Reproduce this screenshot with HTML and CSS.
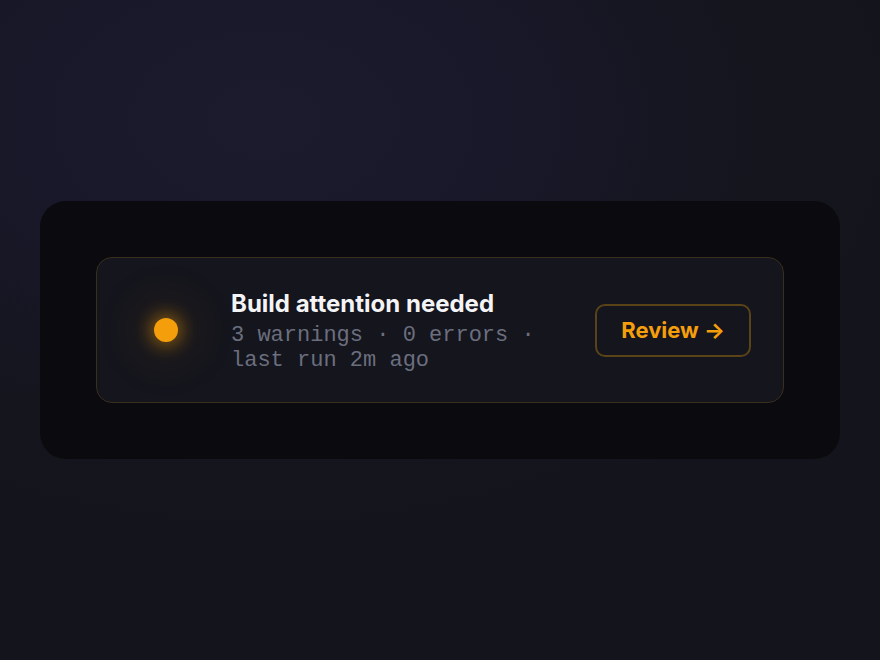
FILE: index.html
```html
<!DOCTYPE html>
<html>
  <head>
    <title>Build status</title>
    <link rel="stylesheet" href="styles.css">
  </head>
  <body>
    <div class="stage">
      <div class="panel">
        <div class="card">
          <div class="signal">
            <span class="dot"></span>
          </div>
          <div class="info">
            <div class="title">Build attention needed</div>
            <div class="meta">3 warnings · 0 errors · last run 2m ago</div>
          </div>
          <button class="review" type="button">Review →</button>
        </div>
      </div>
    </div>
  </body>
</html>
```

FILE: styles.css
```css
html, body {
  margin: 0;
  height: 100%;
}

body {
  font-family: 'Inter', 'Liberation Sans', sans-serif;
  background: radial-gradient(ellipse 75% 65% at 30% 18%, #1c1b2e 0%, #18182a 35%, #15151e 75%, #14141c 100%);
}

.stage {
  height: 660px;
  display: flex;
  align-items: center;
  justify-content: center;
}

.panel {
  width: 800px;
  box-sizing: border-box;
  padding: 56px;
  background-color: #0b0b0f;
  border-radius: 26px;
}

.card {
  display: flex;
  align-items: center;
  gap: 28px;
  padding: 29px 32px;
  border: 1px solid #3a2e1c;
  border-radius: 16px;
  background-color: #14151d;
}

.signal {
  width: 74px;
  height: 74px;
  flex: none;
  display: flex;
  align-items: center;
  justify-content: center;
}

.dot {
  width: 24px;
  height: 24px;
  border-radius: 50%;
  background-color: #f59e0b;
  box-shadow: 0 0 16px 5px rgba(245, 158, 11, 0.4), 0 0 48px 22px rgba(245, 158, 11, 0.07);
}

.info {
  flex: 1;
  text-align: left;
}

.title {
  font-size: 24px;
  font-weight: 700;
  line-height: 30px;
  color: #f4f4f6;
  padding-top: 2px;
}

.meta {
  max-width: 330px;
  margin-top: 4px;
  font-family: 'Liberation Mono', monospace;
  font-size: 22px;
  line-height: 25px;
  color: #6b6e7e;
}

.review {
  flex: none;
  padding: 12px 24px;
  border: 2px solid #5a4317;
  border-radius: 10px;
  background: transparent;
  color: #f59e0b;
  font-family: 'Inter', 'Liberation Sans', sans-serif;
  font-size: 22px;
  font-weight: 700;
  line-height: 25px;
}

.review:hover {
  cursor: pointer;
}
```
